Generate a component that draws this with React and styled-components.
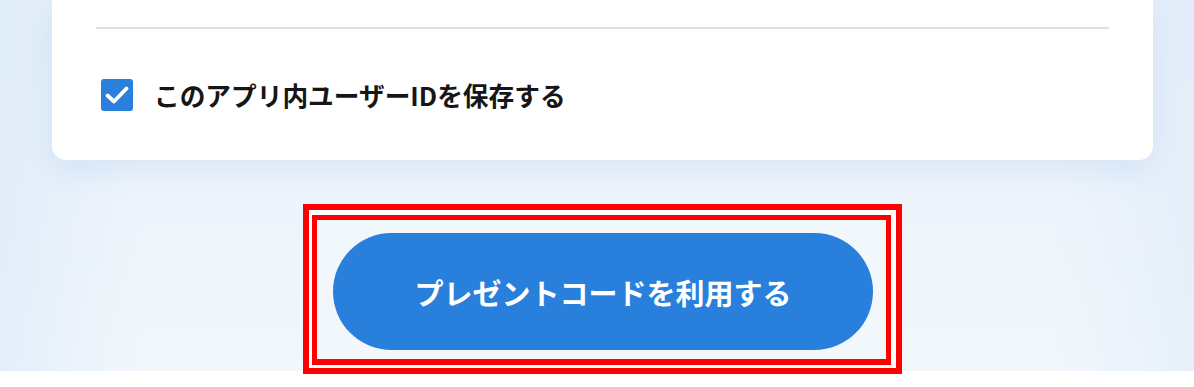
import React from 'react';
import styled, { createGlobalStyle } from 'styled-components';

const GlobalStyle = createGlobalStyle`
  html, body {
    margin: 0;
    padding: 0;
    background: #ffffff;
    font-family: "Noto Sans CJK JP", "Noto Sans", sans-serif;
  }
`;

const Screen = styled.div`
  min-height: 387px;
  background: #fff;
`;

const Page = styled.div`
  height: 371px;
  background:
    linear-gradient(90deg, rgba(214, 230, 247, 0.5) 0%, rgba(214, 230, 247, 0) 12%, rgba(214, 230, 247, 0) 88%, rgba(214, 230, 247, 0.4) 100%),
    linear-gradient(180deg, #eaf2fb 0%, #eef4fb 55%, #f2f7fc 100%);
`;

const Card = styled.section`
  margin: 0 41px 0 52px;
  padding: 27px 44px 0;
  background: #fff;
  border-radius: 0 0 14px 14px;
  box-shadow: 0 10px 30px rgba(40, 120, 210, 0.1);
`;

const Divider = styled.hr`
  margin: 0;
  border: 0;
  height: 2px;
  background: #dcdfe3;
`;

const CheckRow = styled.label`
  display: flex;
  align-items: center;
  gap: 21px;
  padding: 50px 0 49px 5px;
  cursor: pointer;
`;

const CheckBox = styled.span`
  display: flex;
  align-items: center;
  justify-content: center;
  width: 32px;
  height: 32px;
  border-radius: 3px;
  background: ${p => (p.checked ? '#2a80dc' : '#fff')};
`;

const CheckLabel = styled.span`
  font-size: 25.7px;
  font-weight: 700;
  color: #161616;
  line-height: 1;
`;

const ButtonArea = styled.div`
  display: flex;
  justify-content: center;
  margin: 44px 41px 0 52px;
`;

const OuterMark = styled.div`
  border: 6px solid #ff0000;
  padding: 5px 5px 3px 3px;
  background: #fff;
`;

const InnerMark = styled.div`
  border: 5px solid #ff0000;
  border-bottom-width: 6px;
  padding: 13px 13px 9px 16px;
  background: #f2f7fc;
`;

const PrimaryButton = styled.button`
  display: block;
  width: 540px;
  height: 117px;
  border: 0;
  border-radius: 60px;
  background: #2880dc;
  color: #fff;
  font-family: "Noto Sans CJK JP", "Noto Sans", sans-serif;
  font-size: 29px;
  font-weight: 700;
  cursor: pointer;
`;

const CheckIcon = () => (
  <svg width="24" height="20" viewBox="0 0 24 20">
    <polyline points="2.5,10.5 9,16.5 21.5,3.5" fill="none" stroke="#fff" strokeWidth="3.8" strokeLinecap="round" strokeLinejoin="round" />
  </svg>
);

export default function App() {
  return (
    <Screen>
      <GlobalStyle />
      <Page>
        <Card>
          <Divider />
          <CheckRow>
            <CheckBox checked>
              <CheckIcon />
            </CheckBox>
            <CheckLabel>このアプリ内ユーザーIDを保存する</CheckLabel>
          </CheckRow>
        </Card>
        <ButtonArea>
          <OuterMark>
            <InnerMark>
              <PrimaryButton type="button">プレゼントコードを利用する</PrimaryButton>
            </InnerMark>
          </OuterMark>
        </ButtonArea>
      </Page>
    </Screen>
  );
}
